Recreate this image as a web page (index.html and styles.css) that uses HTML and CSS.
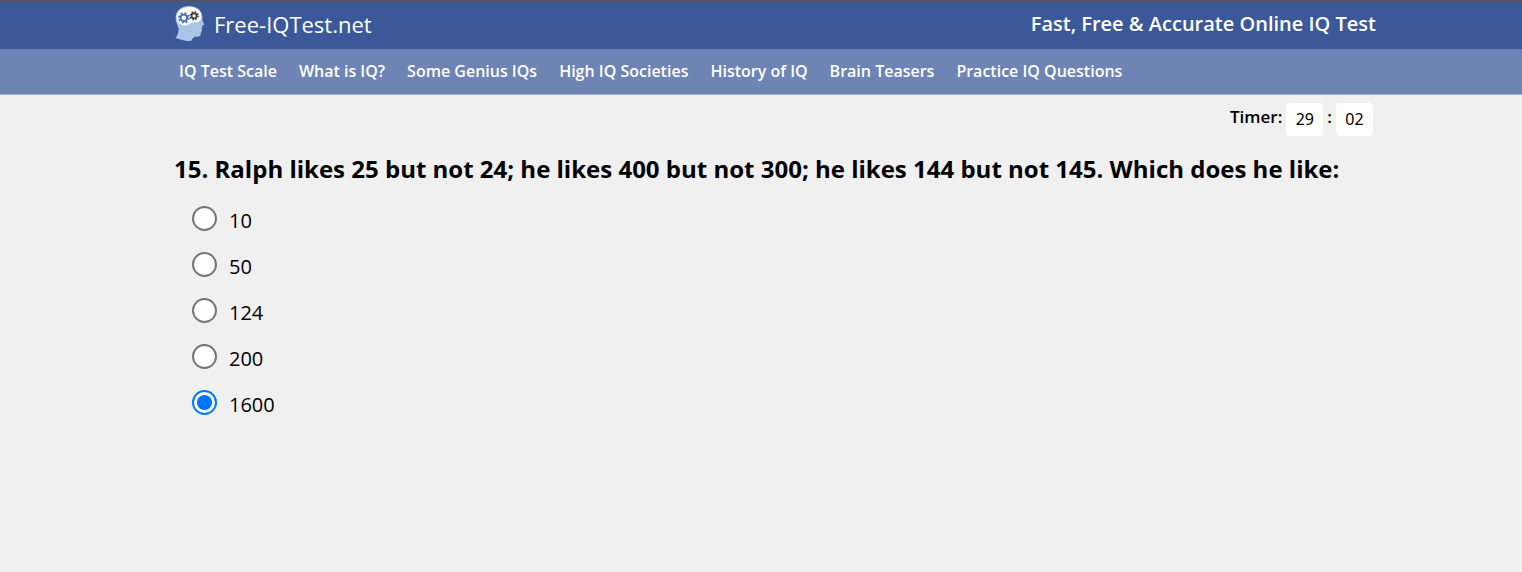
FILE: index.html
```html
<!DOCTYPE html>
<html lang="en">
<head>
<meta charset="utf-8">
<meta name="viewport" content="width=device-width, initial-scale=1">
<title>Free-IQTest.net</title>
<link rel="stylesheet" href="styles.css">
</head>
<body>
<header class="masthead">
  <div class="wrap masthead-row">
    <a class="brand" href="#">
      <svg class="brand-icon" viewBox="0 0 30 36" aria-hidden="true">
        <path fill="#a9c4e4" d="M14 1C6 1 1 6 1 13c0 4 2 7 3 10 0 3-1 6-3 9 5 2 10 3 15 3 1-1 2-3 3-4 2 0 5 0 6-1 1-1 0-2 1-4l1-2-1-1 1-1v-2l2-1c0-1-2-3-2-5C28 6 22 1 14 1z"/>
        <path fill="#fff" d="M14 2C7 2 2 6 2 12c0 4 3 8 8 8 4 0 5-3 8-3 5 0 8-1 8-6 0-6-6-9-12-9z"/>
        <circle cx="9" cy="12.500" r="3.200" fill="none" stroke="#4268ad" stroke-width="1.800"/>
        <circle cx="9" cy="12.500" r="4.800" fill="none" stroke="#4268ad" stroke-width="1.600" stroke-dasharray="1.900 1.870"/>
        <circle cx="19" cy="10.500" r="2.500" fill="none" stroke="#444" stroke-width="1.800"/>
        <circle cx="19" cy="10.500" r="3.900" fill="none" stroke="#444" stroke-width="1.500" stroke-dasharray="1.530 1.530"/>
      </svg>
      <span>Free-IQTest.net</span>
    </a>
    <p class="tagline">Fast, Free &amp; Accurate Online IQ Test</p>
  </div>
</header>
<nav class="nav">
  <div class="wrap nav-row">
    <a class="nav-link" href="#">IQ Test Scale</a>
    <a class="nav-link" href="#">What is IQ?</a>
    <a class="nav-link" href="#">Some Genius IQs</a>
    <a class="nav-link" href="#">High IQ Societies</a>
    <a class="nav-link" href="#">History of IQ</a>
    <a class="nav-link" href="#">Brain Teasers</a>
    <a class="nav-link" href="#">Practice IQ Questions</a>
  </div>
</nav>
<main class="wrap">
  <div class="timer">
    <label class="timer-label" for="minutes">Timer:</label>
    <input class="timer-box" id="minutes" type="text" value="29" readonly>
    <span class="timer-colon">:</span>
    <input class="timer-box" id="seconds" type="text" value="02" aria-label="Seconds" readonly>
  </div>
  <h1 class="question" id="question">15. Ralph likes 25 but not 24; he likes 400 but not 300; he likes 144 but not 145. Which does he like:</h1>
  <form class="options" role="radiogroup" aria-labelledby="question">
    <label class="option"><input class="radio" type="radio" name="answer"><span class="option-text">10</span></label>
    <label class="option"><input class="radio" type="radio" name="answer"><span class="option-text">50</span></label>
    <label class="option"><input class="radio" type="radio" name="answer"><span class="option-text">124</span></label>
    <label class="option"><input class="radio" type="radio" name="answer"><span class="option-text">200</span></label>
    <label class="option"><input class="radio" type="radio" name="answer" checked><span class="option-text">1600</span></label>
  </form>
</main>
</body>
</html>
```
FILE: styles.css
```css
* { box-sizing: border-box; }
body {
  margin: 0;
  background: #f0f0f0;
  color: #000;
  font-family: "Segoe UI", "Open Sans", "Noto Sans", sans-serif;
}
.wrap {
  max-width: 1230px;
  margin: 0 auto;
  padding-left: 28px;
}
.masthead {
  background: #3b5998;
  border-top: 2px solid #55565c;
  color: #fff;
}
.masthead-row {
  display: flex;
  justify-content: space-between;
  align-items: center;
  min-height: 47px;
  padding-bottom: 4px;
}
.brand {
  display: flex;
  align-items: center;
  gap: 8px;
  color: inherit;
  font-size: 22px;
  line-height: 30px;
  font-weight: 500;
  text-decoration: none;
}
.brand-icon { width: 32px; height: 37px; }
.tagline { margin: 0; font-size: 20px; line-height: 30px; font-weight: 600; }
.nav { background: #6d84b4; border-bottom: 1px solid #a9b5d6; }
.nav-row {
  display: flex;
  flex-wrap: wrap;
  gap: 0 22px;
  padding-left: 33px;
}
.nav-link {
  color: #fff;
  font-size: 16px;
  line-height: 45px;
  font-weight: 600;
  text-decoration: none;
}
.timer {
  display: flex;
  justify-content: flex-end;
  gap: 4px;
  padding: 8px 3px 0 0;
}
.timer-label, .timer-colon { font-size: 17px; line-height: 28px; font-weight: 600; }
.timer-box {
  width: 37px;
  height: 33px;
  padding: 0;
  border: 0;
  border-radius: 4px;
  background: #fff;
  color: #000;
  font: 400 16px/33px "Segoe UI", "Noto Sans", sans-serif;
  text-align: center;
}
.question { margin: 15px 0 0; font-size: 24px; line-height: 36px; font-weight: 700; }
.options {
  display: grid;
  gap: 10px;
  justify-items: start;
  padding: 13px 0 0 18px;
}
.option { display: flex; align-items: flex-start; gap: 12px; }
.radio {
  appearance: none;
  width: 25px;
  height: 25px;
  margin: 6px 0 4px;
  border: 2px solid #767676;
  border-radius: 50%;
  background: #fff;
}
.radio:checked {
  border-color: #0075ff;
  background: radial-gradient(circle, #0075ff 7px, #fff 8px);
}
.option-text { padding-top: 6px; font-size: 20px; line-height: 30px; }
```
